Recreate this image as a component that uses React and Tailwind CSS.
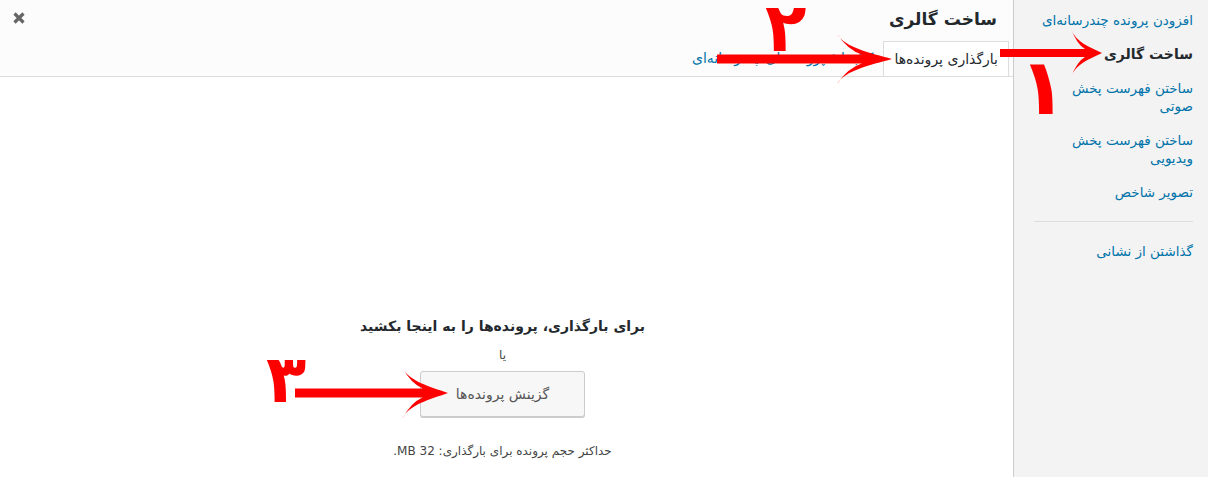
const arrowPath = (x0, tip, y, len, half, s) => {
  const join = tip - len * 0.55;
  const back = tip - len;
  return [
    `M ${x0} ${y - s}`,
    `L ${join} ${y - s}`,
    `Q ${tip - len * 0.8} ${y - half * 0.35} ${back} ${y - half}`,
    `C ${tip - len * 0.85} ${y - half * 0.45} ${tip - len * 0.4} ${y - half * 0.25} ${tip} ${y}`,
    `C ${tip - len * 0.4} ${y + half * 0.25} ${tip - len * 0.85} ${y + half * 0.45} ${back} ${y + half}`,
    `Q ${tip - len * 0.8} ${y + half * 0.35} ${join} ${y + s}`,
    `L ${x0} ${y + s}`,
    "Z",
  ].join(" ");
};

const menu = [
  { label: "افزودن پرونده چندرسانه\u200cای" },
  { label: "ساخت گالری", active: true },
  { label: "ساختن فهرست پخش", second: "صوتی" },
  { label: "ساختن فهرست پخش", second: "ویدیویی" },
  { label: "تصویر شاخص" },
];

export default function App() {
  return (
    <div
      dir="rtl"
      className="relative flex w-[1208px] h-[477px] overflow-hidden bg-white font-['DejaVu_Sans',sans-serif]"
    >
      {/* sidebar */}
      <aside className="w-[195px] shrink-0 bg-[#f3f3f3] border-l border-[#ccc] pt-[3px]">
        {menu.map((item, i) => (
          <a
            key={i}
            className={`block pr-[15px] pl-[20px] py-2 leading-[18px] ${
              item.active ? "font-bold text-[#23282d] text-[14px]" : "text-[13.5px] text-[#0073aa]"
            }`}
          >
            {item.label}
            {item.second && (
              <>
                <br />
                {item.second}
              </>
            )}
          </a>
        ))}
        <div className="mt-3 mb-3 mr-[15px] ml-[20px] border-t border-[#ddd]" />
        <a className="block pr-[15px] pl-[20px] py-2 text-[13.5px] leading-[18px] text-[#0073aa]">
          گذاشتن از نشانی
        </a>
      </aside>

      {/* main frame */}
      <main className="flex-1 flex flex-col">
        <div className="h-[77px] bg-[#fcfcfc] border-b border-[#ddd] flex flex-col">
          <div className="h-[41px] flex items-start justify-between pr-[16px] pl-[13px]">
            <h1 className="text-[17px] font-bold leading-[38px] text-[#23282d]">ساخت گالری</h1>
            <button className="mt-[12px] w-[12px] h-[12px]">
              <svg width="12" height="12" viewBox="0 0 12 12">
                <path d="M1.5 1.5 L10.5 10.5 M10.5 1.5 L1.5 10.5" stroke="#666" strokeWidth="3.2" />
              </svg>
            </button>
          </div>
          <div className="flex-1 flex items-end pr-[4px]">
            <div className="h-[35px] px-[10px] border border-b-0 border-[#ddd] bg-white text-[14px] leading-[35px] text-[#23282d]">
              بارگذاری پرونده‌ها
            </div>
            <a className="h-[35px] px-[10px] text-[14px] leading-[35px] text-[#0073aa]">
              کتابخانهٔ پرونده‌های چندرسانه‌ای
            </a>
          </div>
        </div>

        <div className="flex-1 flex flex-col items-center pt-[237px] pr-[8px] text-[#23282d]">
          <h2 className="text-[14px] font-bold leading-[24px]">
            برای بارگذاری، پرونده‌ها را به اینجا بکشید
          </h2>
          <p className="mt-[7px] text-[12px] leading-[20px] text-[#444]">یا</p>
          <button className="mt-[6px] w-[165px] h-[46px] rounded-[3px] border border-[#ccc] bg-[#f7f7f7] shadow-[0_1px_0_#ccc] text-[14px] text-[#555]">
            گزینش پرونده‌ها
          </button>
          <p className="mt-[25px] text-[12px] leading-[18px] text-[#444]">
            حداکثر حجم پرونده برای بارگذاری: 32 MB.
          </p>
        </div>
      </main>

      {/* red annotations */}
      <svg
        className="absolute left-0 top-0 pointer-events-none"
        width="1208"
        height="477"
        viewBox="0 0 1208 477"
      >
        <path d={arrowPath(1000, 1102, 53, 31, 24, 4)} fill="#ff0000" />
        <path d={arrowPath(717, 892, 59, 55, 25, 4.5)} fill="#ff0000" />
        <path d={arrowPath(295, 448, 393, 46, 26, 4.5)} fill="#ff0000" />
      </svg>
      <span className="absolute left-[1019px] top-[48px] text-[78px] leading-none font-bold text-[#ff0000] pointer-events-none">
        ۱
      </span>
      <span className="absolute left-[765px] top-[-6px] text-[68px] leading-none font-bold text-[#ff0000] pointer-events-none">
        ۲
      </span>
      <span className="absolute left-[266px] top-[347px] text-[66px] leading-none font-bold text-[#ff0000] pointer-events-none">
        ۳
      </span>
    </div>
  );
}
